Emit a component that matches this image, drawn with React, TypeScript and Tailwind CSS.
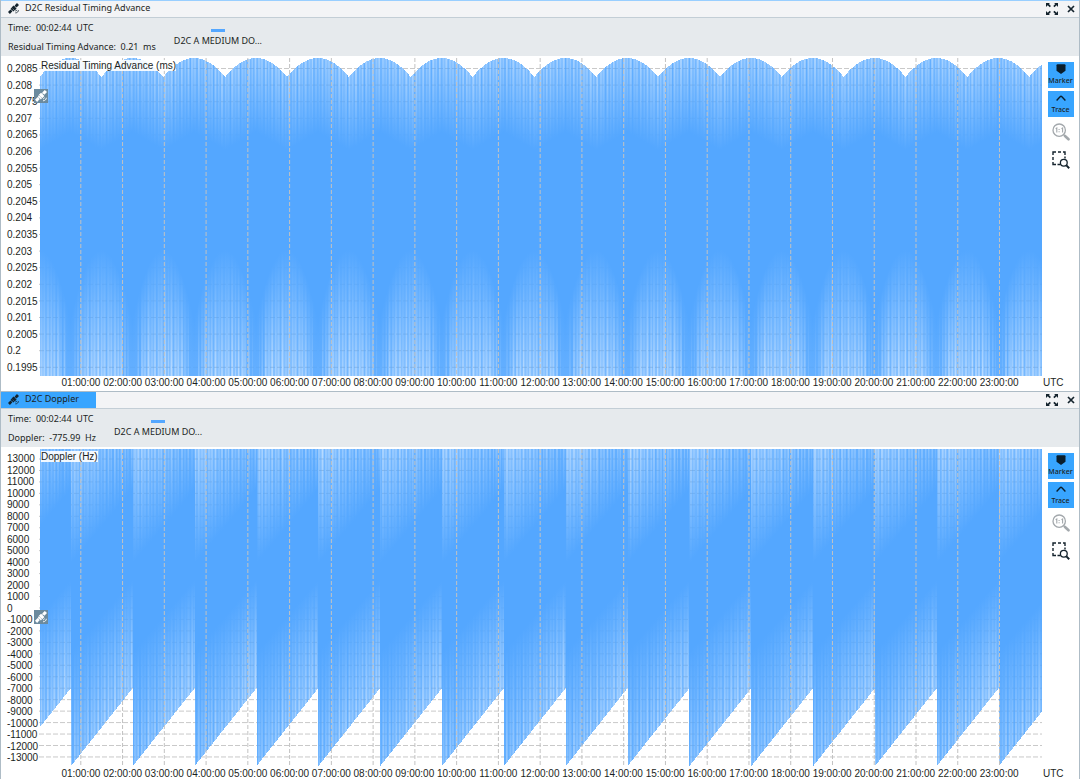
import React from "react";

const PLOT_W = 1003;
const PLOT_H = 320;
const PERIOD = 61.85;
const LEVELS = [30, 40, 50, 60, 70, 80, 90];

const HOURS = Array.from({ length: 23 }, (_, i) => `${String(i + 1).padStart(2, "0")}:00:00`);
const TIMING_TICKS = Array.from({ length: 19 }, (_, i) => String(Number((0.2085 - i * 0.0005).toFixed(4))));
const DOPPLER_TICKS = Array.from({ length: 27 }, (_, i) => String(13000 - i * 1000));

interface Column {
  top: number;
  bottom: number;
  fadeTop: number;
  fadeBottom: number;
  topAlpha: number;
  bottomAlpha: number;
}

// uneven line spacing of the satellite passes
const stripe = (x: number) =>
  Math.cos((2 * Math.PI * x) / 3.35) * 0.65 + Math.cos((2 * Math.PI * x) / 5.6) * 0.35;

const timingColumn = (x: number): Column => {
  const p = (((x - 31) / PERIOD + 0.5) % 1 + 1) % 1;
  const u = Math.abs(p - 0.5) * 2;
  const top = Math.round(2 + 19 * u * u);
  return {
    top,
    bottom: PLOT_H,
    fadeTop: 76 + 18 * u,
    fadeBottom: 194 + 70 * Math.pow(1 - u, 2),
    topAlpha: 0.67 + 0.2 * stripe(x),
    bottomAlpha: 0.98 - 0.38 * Math.min(1, u * 2.4) + 0.18 * stripe(x) * Math.min(1, 0.3 + u * 3),
  };
};

const dopplerColumn = (x: number): Column => {
  const p = (((x - 31.5) / PERIOD) % 1 + 1) % 1;
  return {
    top: 2,
    bottom: Math.round(319 - 78 * p),
    fadeTop: 116 - 74 * p,
    fadeBottom: 205 - 72 * p,
    topAlpha: 0.6 + 0.25 * p + 0.18 * stripe(x),
    bottomAlpha: 0.76 - 0.16 * p + 0.18 * stripe(x),
  };
};

const level = (alpha: number) => Math.max(30, Math.min(90, Math.round(alpha * 10) * 10));

interface PlotProps {
  id: string;
  column: (x: number) => Column;
  gridStart: number;
  gridStep: number;
  rows: number;
}

function Plot({ id, column, gridStart, gridStep, rows }: PlotProps) {
  const xs = Array.from({ length: PLOT_W - 1 }, (_, i) => i + 1);
  return (
    <svg
      viewBox={`0 0 ${PLOT_W} ${PLOT_H}`}
      preserveAspectRatio="none"
      className="block h-80 w-full"
      aria-hidden="true"
    >
      <defs>
        {LEVELS.map((l) => (
          <React.Fragment key={l}>
            <linearGradient id={`${id}-t${l}`} x1="0" y1="0" x2="0" y2="1">
              <stop offset="0" stopColor="#54a7ff" stopOpacity={l / 100} />
              <stop offset="1" stopColor="#54a7ff" />
            </linearGradient>
            <linearGradient id={`${id}-b${l}`} x1="0" y1="0" x2="0" y2="1">
              <stop offset="0" stopColor="#54a7ff" />
              <stop offset="1" stopColor="#54a7ff" stopOpacity={l / 100} />
            </linearGradient>
          </React.Fragment>
        ))}
      </defs>
      <g stroke="#c9c9c9" strokeDasharray="5 2">
        {Array.from({ length: rows }, (_, i) => (
          <line key={i} x1="0" x2={PLOT_W} y1={gridStart + i * gridStep} y2={gridStart + i * gridStep} />
        ))}
      </g>
      <g shapeRendering="crispEdges">
        {xs.map((x) => {
          const c = column(x);
          const a = Math.round(c.fadeTop);
          const b = Math.round(c.fadeBottom);
          return (
            <React.Fragment key={x}>
              <rect x={x} y={c.top} width="1" height={a - c.top} fill={`url(#${id}-t${level(c.topAlpha)})`} />
              <rect x={x} y={a} width="1" height={b - a} fill="#54a7ff" />
              <rect x={x} y={b} width="1" height={c.bottom - b} fill={`url(#${id}-b${level(c.bottomAlpha)})`} />
            </React.Fragment>
          );
        })}
      </g>
      <g stroke="#c2c2c2" strokeDasharray="4 2">
        {HOURS.map((h, i) => (
          <line key={h} x1={41.8 + i * 41.76} x2={41.8 + i * 41.76} y1="2" y2={PLOT_H} />
        ))}
      </g>
    </svg>
  );
}

function Satellite({ className }: { className: string }) {
  return (
    <svg viewBox="0 0 12 12" className={className} fill="currentColor" aria-hidden="true">
      <path d="M7.2 2.6 9.8 0 12 2.1 9.3 4.8zM0 9.8 2.7 7l2.1 2.1L2.1 12zM3.8 4.8 6.1 2.7l3.3 3.4-2.1 2.1z" />
      <path d="M2.8 6.3 3.9 5.2 7 8.3 5.9 9.4z" />
      <path d="M8 8.7c.9.1 1.4-.4 1.6-1.2M8 10.8c2 0 3.1-1.1 3.4-3M3.4 8l5-5" fill="none" stroke="currentColor" strokeWidth=".9" />
    </svg>
  );
}

function ExpandIcon() {
  return (
    <svg viewBox="0 0 12 12" className="h-3 w-3" aria-hidden="true">
      <path d="M0 0h4L2.9 1.1l2 2-1.1 1.1-2.1-2L0 4zM12 0v4l-1.4-1.7-2.2 2-1.1-1.2 2-2L8 0zM0 12V8l1.7 1.7 2.1-2L4.9 8.9l-2 2L4 12zM12 12H8l1.3-1.1-2-2 1.1-1.2 2.2 2L12 8z" fill="#14232d" />
    </svg>
  );
}

function CloseIcon() {
  return (
    <svg viewBox="0 0 8 8" className="h-2 w-2" aria-hidden="true">
      <path d="m1 1 6 6M7 1 1 7" stroke="#14232d" strokeWidth="1.7" />
    </svg>
  );
}

function Tools() {
  return (
    <div className="flex w-[37px] shrink-0 flex-col items-center pt-1.5">
      <button className="flex h-[26px] w-[26px] flex-col items-center bg-[#38a5ff] pt-0.5">
        <svg viewBox="0 0 10 10" className="h-2.5 w-2.5" aria-hidden="true">
          <path d="M.5 1.3Q.5.3 1.5.3h7q1 0 1 1v5.4L5 10 .5 6.7z" fill="#0a1e2c" />
        </svg>
        <span className="mt-0.5 text-[7px] font-medium leading-[10px]">Marker</span>
      </button>
      <button className="mt-[3px] flex h-[26px] w-[26px] flex-col items-center bg-[#38a5ff] pt-0.5">
        <svg viewBox="0 0 10 10" className="h-2.5 w-2.5" aria-hidden="true">
          <path d="m.6 7.5 3.5-3.8q.9-.8 1.8 0l3.5 3.8" fill="none" stroke="#0a1e2c" strokeWidth="1.4" />
        </svg>
        <span className="mt-0.5 text-[7px] font-medium leading-[10px]">Trace</span>
      </button>
      <button aria-label="Zoom 1:1" className="mt-1.5 h-[18px] w-[18px]">
        <svg viewBox="0 0 18 18" className="h-full w-full" aria-hidden="true">
          <circle cx="7.2" cy="7.2" r="6.2" fill="none" stroke="#a3a8ac" strokeWidth="1.3" />
          <path d="m11.5 11.5 1.5 1.5" stroke="#a3a8ac" strokeWidth="1.3" />
          <path d="m13 13 3.5 3.3" stroke="#a3a8ac" strokeWidth="2.6" strokeLinecap="round" />
          <path d="m3.7 5.8 1.1-.8v4.5M9.5 5.8l1.1-.8v4.5M7.1 6v1M7.1 8.2v1" fill="none" stroke="#a3a8ac" strokeWidth="1.1" />
        </svg>
      </button>
      <button aria-label="Zoom to selection" className="mt-2.5 h-[18px] w-[18px]">
        <svg viewBox="0 0 18 18" className="h-full w-full" fill="none" stroke="#14232d" aria-hidden="true">
          <path d="M1 4V1h3M6 1h3M11 1h2v3M13 5.5v2M1 6v3M1 11v2.5h3M5.5 13.5h2.5" strokeWidth="1.4" />
          <circle cx="11.8" cy="11.8" r="3.4" strokeWidth="1.3" />
          <path d="m14.4 14.4 2.8 2.8" strokeWidth="2" />
        </svg>
      </button>
    </div>
  );
}

interface PanelProps {
  title: string;
  active?: boolean;
  reading: string;
  axisTitle: string;
  ticks: string[];
  tickClass: string;
  markerClass: string;
  plot: React.ReactNode;
}

function Panel({ title, active, reading, axisTitle, ticks, tickClass, markerClass, plot }: PanelProps) {
  return (
    <section className={`border-t ${active ? "border-[#aebcc6]" : "border-[#99cfff]"}`}>
      <header className="flex h-[17px] items-center justify-between border-b border-[#c3ced6] bg-[#f3f4f6] pr-1">
        <h2 className={`flex h-4 items-center gap-1.5 pb-0.5 pl-[7px] pr-[17px] text-[9px] leading-3 ${active ? "bg-[#38a5ff]" : ""}`}>
          <Satellite className="h-[11px] w-[11px] text-[#14232d]" />
          {title}
        </h2>
        <div className="flex items-center gap-[9px] pb-px">
          <button aria-label="Expand">
            <ExpandIcon />
          </button>
          <button aria-label="Close">
            <CloseIcon />
          </button>
        </div>
      </header>
      <div className="flex h-[38px] gap-[18px] whitespace-pre bg-[#e6eaed] pl-[7px] text-[9px]">
        <div className="leading-[19px]">
          <p>Time:  00:02:44  UTC</p>
          <p>{reading}</p>
        </div>
        <div className="flex flex-col items-center pt-[11px]">
          <span className="h-[3px] w-[14px] bg-[#54a7ff]" />
          <span className="mt-0.5 leading-[13px]">D2C A MEDIUM DO...</span>
        </div>
      </div>
      <div className="flex font-['Liberation_Sans',Arial,sans-serif] text-[10px]">
        <div className={`flex h-80 w-[38px] shrink-0 flex-col justify-between pl-1.5 leading-[10px] ${tickClass}`}>
          {ticks.map((t) => (
            <span key={t}>{t}</span>
          ))}
        </div>
        <div className="relative min-w-0 flex-1">
          {plot}
          <span className="absolute left-0.5 top-1 bg-white/90 leading-[11px]">{axisTitle}</span>
          <span className={`absolute -left-[5px] flex h-[14px] w-[14px] items-center justify-center bg-[#6b8a9e] ${markerClass}`}>
            <Satellite className="h-3 w-3 text-white" />
          </span>
        </div>
        <div className="flex font-['Noto_Sans',sans-serif]">
          <Tools />
        </div>
      </div>
      <div className="flex h-3 pl-[59px] pt-0.5 font-['Liberation_Sans',Arial,sans-serif] text-[10px] leading-[10px]">
        <div className="grid flex-1 grid-cols-[repeat(23,minmax(0,1fr))]">
          {HOURS.map((h) => (
            <span key={h} className="flex justify-center whitespace-nowrap">
              {h}
            </span>
          ))}
        </div>
        <span className="w-[59px] pl-[23px]">UTC</span>
      </div>
    </section>
  );
}

export default function App() {
  return (
    <main className="min-h-screen overflow-hidden border-x border-[#aebcc6] bg-white font-['Noto_Sans',sans-serif] text-[#1b1f23]">
      <Panel
        title="D2C Residual Timing Advance"
        reading="Residual Timing Advance:  0.21  ms"
        axisTitle="Residual Timing Advance (ms)"
        ticks={TIMING_TICKS}
        tickClass="pt-2 pb-[3px]"
        markerClass="top-[33px]"
        plot={<Plot id="timing" column={timingColumn} gridStart={12.5} gridStep={16.6} rows={19} />}
      />
      <div className="h-[3px]" />
      <Panel
        title="D2C Doppler"
        active
        reading="Doppler:  -775.99  Hz"
        axisTitle="Doppler (Hz)"
        ticks={DOPPLER_TICKS}
        tickClass="pt-[7px] pb-1"
        markerClass="top-[163px]"
        plot={<Plot id="doppler" column={dopplerColumn} gridStart={12} gridStep={11.46} rows={27} />}
      />
    </main>
  );
}
